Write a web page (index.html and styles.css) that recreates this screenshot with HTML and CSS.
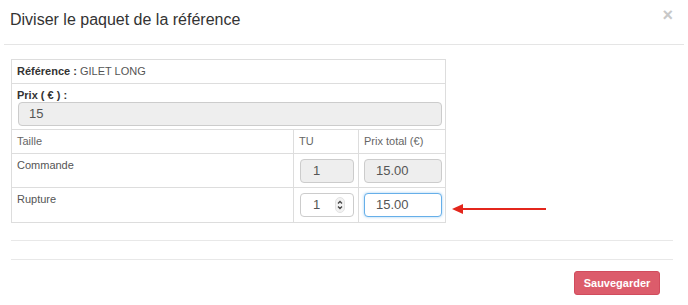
FILE: index.html
```html
<!DOCTYPE html>
<html lang="fr">
<head>
    <meta charset="UTF-8">
    <meta name="viewport" content="width=device-width, initial-scale=1.0">
    <title>Diviser le paquet</title>
    <link rel="stylesheet" href="styles.css">
</head>
<body>

    <div class="modal">
        <div class="modal-header">
            <h4 class="modal-title">Diviser le paquet de la référence</h4>
            <span class="close">&times;</span>
        </div><!--modal-header-->

        <div class="modal-body">
            <div class="split">
                <table class="split-table">
                    <colgroup>
                        <col class="c1">
                        <col class="c2">
                        <col class="c3">
                    </colgroup>
                    <tr>
                        <td colspan="3"><strong>Référence :</strong> GILET LONG</td>
                    </tr>
                    <tr>
                        <td colspan="3" class="price-cell">
                            <strong>Prix ( € ) :</strong>
                            <div class="field field-wide disabled">15</div>
                        </td>
                    </tr>
                    <tr class="head">
                        <td>Taille</td>
                        <td>TU</td>
                        <td>Prix total (€)</td>
                    </tr>
                    <tr class="row-cmd">
                        <td>Commande</td>
                        <td><div class="field field-tu disabled">1</div></td>
                        <td><div class="field field-price disabled">15.00</div></td>
                    </tr>
                    <tr class="row-rup">
                        <td>Rupture</td>
                        <td>
                            <div class="field field-tu num">
                                <span>1</span>
                                <svg class="spin" width="10" height="16" viewBox="0 0 10 16">
                                    <rect x="0.5" y="0.5" width="9" height="15" rx="4.5" fill="#f2f2f2" stroke="#e2e2e2"/>
                                    <path d="M3 6.5 L5 4.5 L7 6.5" fill="none" stroke="#444" stroke-width="1.3"/>
                                    <path d="M3 9.5 L5 11.5 L7 9.5" fill="none" stroke="#444" stroke-width="1.3"/>
                                </svg>
                            </div>
                        </td>
                        <td><div class="field field-price focus">15.00</div></td>
                    </tr>
                </table>

                <svg class="arrow" width="96" height="14" viewBox="0 0 96 14">
                    <path d="M10 7 H94" stroke="#e3261c" stroke-width="2"/>
                    <path d="M0 7 L11 2 L11 12 Z" fill="#e3261c"/>
                </svg>
            </div><!--split-->

            <hr class="sep">
        </div><!--modal-body-->

        <div class="modal-footer">
            <button class="btn-save">Sauvegarder</button>
        </div><!--modal-footer-->
    </div><!--modal-->

</body>
</html>
```

FILE: styles.css
```css
*{
    margin:0;
    padding:0;
    box-sizing: border-box;
}

body{
    background-color: #fff;
    font-family: "Liberation Sans", Arial, sans-serif;
    color: #333;
}

.modal{
    width: 688px;
}

.modal-header{
    display: flex;
    justify-content: space-between;
    align-items: flex-start;
    margin: 0 4px;
    padding: 10px 11px 14px 6px;
    border-bottom: 1px solid #e5e5e5;
}
.modal-title{
    font-size: 16px;
    font-weight: normal;
    line-height: 20px;
    color: #333;
}
.close{
    font-size: 18px;
    font-weight: bold;
    line-height: 18px;
    color: #c8c8c8;
    margin-top: -4px;
}

.modal-body{
    padding: 14px 15px 0 11px;
}

.split{
    display: flex;
    align-items: flex-end;
    gap: 6px;
}

.split-table{
    width: 434px;
    border-collapse: collapse;
    font-size: 11px;
    table-layout: fixed;
}
.c1{ width: 282px; }
.c2{ width: 65px; }
.c3{ width: 87px; }

.split-table td{
    border: 1px solid #ddd;
    padding: 5px 4px 5px 5px;
    line-height: 13px;
    vertical-align: top;
    color: #555;
}
.split-table td strong{
    color: #333;
}
.split-table .price-cell{
    padding-bottom: 3px;
}
.head td{
    color: #666;
}
.row-cmd td{
    padding-bottom: 4px;
}
.row-rup td{
    padding-top: 5px;
    padding-bottom: 5px;
}

.field{
    height: 24px;
    border: 1px solid #ccc;
    border-radius: 4px;
    font-size: 13px;
    line-height: 22px;
    color: #555;
    background-color: #fff;
    padding-left: 10px;
}
.field.disabled{
    background-color: #eee;
}
.field-wide{
    margin: 0 0 0 1px;
    width: 424px;
}
.field-tu{
    width: 54px;
    padding-left: 12px;
    margin-left: 1px;
}
.field-price{
    width: 78px;
    padding-left: 11px;
}
.field.focus{
    border-color: #66afe9;
    box-shadow: 0 0 3px rgba(102, 175, 233, 0.6);
}
.num{
    display: flex;
    align-items: center;
    justify-content: space-between;
    padding-right: 8px;
}
.spin{
    display: block;
}

.arrow{
    margin-bottom: 7px;
}

.sep{
    border: 0;
    border-top: 1px solid #e8e8e8;
    margin-top: 17px;
    width: 662px;
}

.modal-footer{
    margin: 18px 15px 0 11px;
    border-top: 1px solid #e8e8e8;
    padding: 11px 13px 0 0;
    display: flex;
    justify-content: flex-end;
}

.btn-save{
    width: 86px;
    height: 24px;
    border: 1px solid #d14c5d;
    border-radius: 3px;
    background-color: #dc5c6b;
    color: #fff;
    font-family: "Liberation Sans", Arial, sans-serif;
    font-size: 11px;
    font-weight: bold;
}
```
